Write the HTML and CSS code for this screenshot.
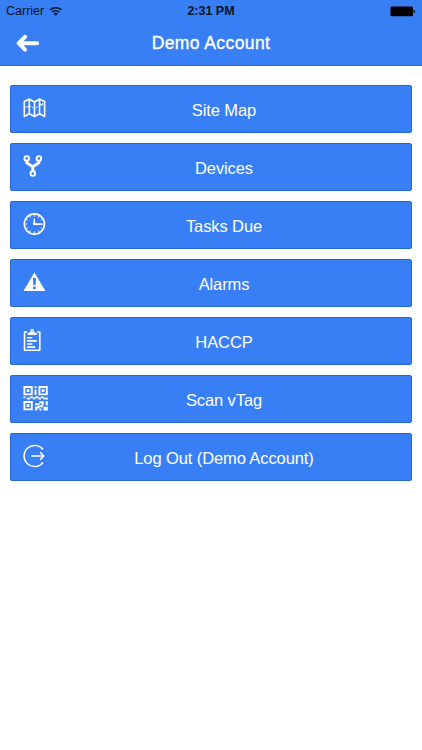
FILE: index.html
```
<!DOCTYPE html>
<html lang="en">
<head>
<meta charset="utf-8">
<title>Demo Account</title>
<link rel="stylesheet" href="styles.css">
</head>
<body>
<header class="header">
  <div class="status">
    <div class="carrier"><span>Carrier</span>
      <svg class="wifi" width="14" height="11" viewBox="0 0 14 11" fill="none" stroke="#071226" stroke-width="1.6"><path d="M1.2 3.900a8.2 8.2 0 0 1 11.2 0M3.3 6.100a5.1 5.1 0 0 1 7 0"/><path d="M4.8 7.600a2.8 2.8 0 0 1 4 0l-2 2.1z" fill="#071226" stroke="none"/></svg>
    </div>
    <span class="time">2:31 PM</span>
    <svg class="battery" width="26" height="11" viewBox="0 0 26 11"><rect x=".5" y=".5" width="22.5" height="9.8" rx="1.2"/><path d="M23.7 3.8q1.4 .2 1.4 1.6t-1.4 1.6z"/></svg>
  </div>
  <div class="navbar">
    <svg class="back" width="24" height="20" viewBox="0 0 24 20" fill="none" stroke="#fff" stroke-width="4" stroke-linecap="round" stroke-linejoin="round"><path d="M9 2.800 2.7 9.2 9 15.600M3.2 9.2h18"/></svg>
    <h1 class="title">Demo Account</h1>
  </div>
</header>
<main class="menu">
  <button class="item"><svg class="icon" viewBox="0 0 30 30"><path d="M4.3 7.5 9.3 5l5.2 3 5-3 5.1 2.5v15l-5.1-2.8-5 2.8-5.2-2.8-5 2.8zM9.3 5v14.7M14.5 8v14.5M19.5 5v14.7"/><path class="thin" d="m5 14.5 2-2 2 .5 2-1m1 .8 1.5 1.7m2.5-.2 1.5-2m2-1.2 3-.5v-1.7m-3 0 3 3"/></svg><span>Site Map</span></button>
  <button class="item"><svg class="icon" viewBox="0 0 30 30"><g stroke-width="1.9"><circle cx="6.7" cy="6.4" r="2.3"/><circle cx="18.9" cy="6.4" r="2.3"/><circle cx="12.8" cy="21.6" r="2.3"/></g><path stroke-width="3" d="M6.7 9.2v1.6l6.1 4 6.1-4V9.2M12.8 14.5v4.8"/></svg><span>Devices</span></button>
  <button class="item"><svg class="icon" viewBox="0 0 30 30"><circle cx="14.4" cy="14" r="10.1"/><path d="M14.3 8.4V14M14.3 14.1h7.5"/><circle class="solid" cx="14.3" cy="14" r="1.3"/><path class="thin" d="M14.4 4.6v2M14.4 21.4v2M5 14h2M21.8 14h2M9.7 5.9l.9 1.6M18.2 20.5l.9 1.6M6.3 9.3l1.6.9M20.9 17.8l1.6.9M19.1 5.9l-.9 1.6M10.6 20.5l-.9 1.6M22.5 9.3l-1.6.9M7.9 17.8l-1.6.9"/></svg><span>Tasks Due</span></button>
  <button class="item"><svg class="icon" viewBox="0 0 30 30"><path class="solid" fill-rule="evenodd" d="M14.4 4.5 25.4 23.1H3.5zM12.9 10.1l.4 6.9h2.3l.4-6.9zM13.1 18.5v2.4h2.7v-2.4z"/></svg><span>Alarms</span></button>
  <button class="item"><svg class="icon" viewBox="0 0 30 30"><path d="M7.2 6H4.5v18.2h15.3V6h-2.7"/><path class="solid" fill-rule="evenodd" d="M7.7 9V6.7h1.6l1.2-1.2V4.2q0-1.3 1.7-1.3t1.7 1.3v1.3L15 6.7h1.7V9zM11.6 4.2v1.2h1.2V4.2z"/><path d="M7.1 11.7h5.2M7.1 14.9h9.7M7.1 18h5.3M7.1 21.1h8"/></svg><span>HACCP</span></button>
  <button class="item"><svg class="icon" viewBox="0 0 30 30"><path stroke-width="1.9" stroke-linejoin="miter" d="M4.4 3h7.4v7.4H4.4zM19.4 3h7.4v7.4h-7.4zM4.4 18h7.4v7.4H4.4z"/><path class="solid" d="M6.700 5.300h2.8v2.8h-2.8zM21.700 5.300h2.8v2.8h-2.8zM6.700 20.300h2.8v2.8h-2.8zM14.500 2.200h2v2h-2zM14.500 5.800h2v5.200h-2zM3.400 12.400h2v1.800h-2zM6.800 13.400h3.400v2.200h-3.400zM10.200 12.400h3v1.800h-3zM13.200 13.600h2.200v2h-2.200zM15.400 12.200h3v2h-3zM18.400 13.600h2.600v2h-2.600zM21 12.400h2.400v1.800h-2.400zM23.400 13.600h4.400v2h-4.400zM19.300 17.300h4.500v2h-4.500zM25.700 17.300h2.100v4h-2.100zM15 19.300h4.500v2h-4.500zM21.700 19.300h2v2h-2zM19.500 21.300h3.300v2h-3.300zM15 22.700h2.200v3.700h-2.200zM17.200 22h2.300v2.500h-2.300zM19.500 24.500h2v1.900h-2zM23.500 22.800h4.300v3.600h-4.300z"/></svg><span>Scan vTag</span></button>
  <button class="item"><svg class="icon" viewBox="0 0 30 30"><path d="M22.9 7.6a10.5 10.5 0 1 0 0 12.8M11.2 14h12.5M20.1 10.3l3.700 3.700-3.700 3.700"/></svg><span>Log Out (Demo Account)</span></button>
</main>
</body>
</html>
```

FILE: styles.css
```
* { box-sizing: border-box; }
body {
  margin: 0;
  min-height: 750px;
  background: #fff;
  font-family: "Liberation Sans", Arial, sans-serif;
}
.header {
  height: 66px;
  background: #387ff5;
  border-bottom: 1px solid #2c6ad8;
}
.status {
  display: grid;
  grid-template-columns: 1fr auto 1fr;
  align-items: center;
  height: 22px;
  padding: 0 6px;
  color: #071226;
  font-size: 12.5px;
}
.carrier { display: flex; align-items: center; gap: 5px; }
.time { font-weight: bold; font-size: 12.5px; }
.battery { justify-self: end; fill: #000; }
.navbar {
  display: grid;
  grid-template-columns: 40px 1fr 40px;
  align-items: center;
  height: 43px;
  padding: 0 16px;
}
.title {
  margin: 0;
  color: #fff;
  font-size: 17.5px;
  font-weight: normal;
  letter-spacing: .4px;
  -webkit-text-stroke: .35px #fff;
  text-align: center;
}
.menu {
  display: flex;
  flex-direction: column;
  gap: 10px;
  padding: 19px 10px 0;
}
.item {
  display: grid;
  grid-template-columns: 30px 1fr;
  align-items: center;
  height: 48px;
  padding: 0 13px 0 9px;
  border: 1px solid #2467d8;
  border-radius: 2px;
  background: #387ff5;
  color: #fff;
  font: 16.5px "Liberation Sans", Arial, sans-serif;
  letter-spacing: -.1px;
  text-align: center;
}
.item span { line-height: 20px; padding-top: 1px; }
.icon {
  width: 30px;
  height: 30px;
  fill: none;
  stroke: #fff;
  stroke-width: 1.6;
  stroke-linejoin: round;
}
.icon .thin { stroke-width: .9; }
.icon .solid { fill: #fff; stroke: none; }
```
